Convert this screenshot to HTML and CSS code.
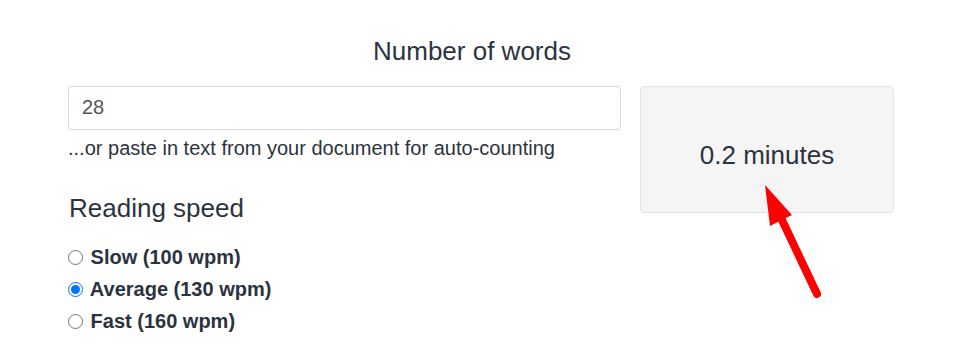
FILE: index.html
```html
<!DOCTYPE html>
<html lang="en">
<head>
<meta charset="utf-8">
<title>Reading time calculator</title>
<link rel="stylesheet" href="styles.css">
</head>
<body>
<div class="page">
  <h3 class="title">Number of words</h3>
  <div class="row">
    <div class="left">
      <input class="words" type="text" value="28">
      <p class="help">...or paste in text from your document for auto-counting</p>
      <h3 class="speed-title">Reading speed</h3>
      <div class="options">
        <label class="opt"><input type="radio" name="speed"> Slow (100 wpm)</label>
        <label class="opt"><input type="radio" name="speed" checked> Average (130 wpm)</label>
        <label class="opt"><input type="radio" name="speed"> Fast (160 wpm)</label>
      </div>
    </div>
    <div class="right">
      <div class="result">0.2 minutes</div>
    </div>
  </div>
  <svg class="arrow" width="80" height="125" viewBox="0 0 80 125" aria-hidden="true">
    <line x1="27" y1="40" x2="62" y2="114" stroke="#ff0000" stroke-width="8" stroke-linecap="round"/>
    <polygon points="10,5 15,46 37,35" fill="#ff0000"/>
  </svg>
</div>
</body>
</html>
```

FILE: styles.css
```css
html, body {
  margin: 0;
  padding: 0;
  background: #ffffff;
}
body {
  font-family: "Liberation Sans", Arial, sans-serif;
  color: #2c3340;
}
.page {
  position: relative;
  padding: 37px 71px 0 68px;
  width: 826px;
}
.title {
  margin: 0 0 20px 0;
  padding-right: 18px;
  text-align: center;
  font-size: 26px;
  font-weight: normal;
  line-height: 28.6px;
}
.row {
  display: flex;
  gap: 19px;
  align-items: flex-start;
}
.left {
  width: 553px;
  flex: none;
}
.right {
  width: 254px;
  flex: none;
}
.words {
  display: block;
  box-sizing: border-box;
  width: 100%;
  height: 44px;
  margin: 0;
  padding: 0 13px;
  border: 1px solid #dadada;
  border-radius: 4px;
  font-family: inherit;
  font-size: 20px;
  color: #555555;
  outline: none;
}
.help {
  margin: 0;
  padding-top: 4px;
  font-size: 20px;
  line-height: 28.4px;
}
.speed-title {
  margin: 32px 0 19px 1px;
  font-size: 26px;
  font-weight: normal;
  line-height: 28.6px;
}
.options {
  display: flex;
  flex-direction: column;
}
.opt {
  display: flex;
  align-items: center;
  height: 32px;
  font-size: 20px;
  font-weight: bold;
  white-space: pre;
}
.opt input {
  width: 15px;
  height: 15px;
  margin: 0 2px 0 0;
}
.result {
  box-sizing: border-box;
  height: 127px;
  padding-top: 13px;
  display: flex;
  align-items: center;
  justify-content: center;
  background: #f5f5f5;
  border: 1px solid #e3e3e3;
  border-radius: 4px;
  font-size: 26px;
  line-height: 28.6px;
}
.arrow {
  position: absolute;
  left: 755px;
  top: 180px;
}
```
